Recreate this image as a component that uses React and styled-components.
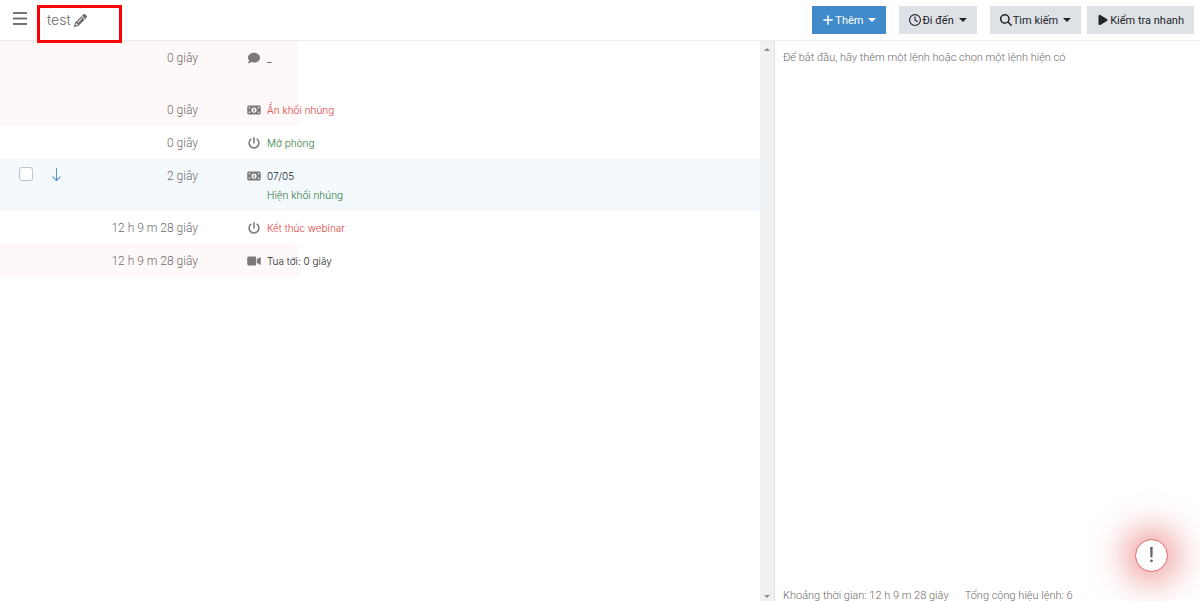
import styled, { createGlobalStyle } from "styled-components";
import {
    FaPencil,
    FaPlus,
    FaRegClock,
    FaMagnifyingGlass,
    FaPlay,
    FaComment,
    FaMoneyBill1,
    FaPowerOff,
    FaVideo,
} from "react-icons/fa6";
import { BsArrowDown } from "react-icons/bs";

const commands = [
    { id: 1, time: "0 giây", icon: <FaComment/>, title: "_", tall: true, passed: true },
    { id: 2, time: "0 giây", icon: <FaMoneyBill1/>, title: "Ẩn khối nhúng", tone: "red", passed: true },
    { id: 3, time: "0 giây", icon: <FaPowerOff/>, title: "Mở phòng", tone: "green" },
    { id: 4, time: "2 giây", icon: <FaMoneyBill1/>, title: "07/05", note: "Hiện khối nhúng", tall: true, active: true },
    { id: 5, time: "12 h 9 m 28 giây", icon: <FaPowerOff/>, title: "Kết thúc webinar", tone: "red" },
    { id: 6, time: "12 h 9 m 28 giây", icon: <FaVideo/>, title: "Tua tới: 0 giây", passed: true },
];

export default function App() {
    return (
        <Page>
            <GlobalStyle/>
            <Header>
                <MenuButton aria-label="Menu">
                    <svg width="14" height="13" viewBox="0 0 14 13">
                        <path d="M0 1h14M0 6.5h14M0 12h14" stroke="currentColor" strokeWidth="1.8"/>
                    </svg>
                </MenuButton>
                <Title>
                    test
                    <EditButton aria-label="Edit"><FaPencil/></EditButton>
                    <Highlight/>
                </Title>
                <Toolbar>
                    <ToolButton $primary><FaPlus/>Thêm<Caret/></ToolButton>
                    <ToolButton><FaRegClock/>Đi đến<Caret/></ToolButton>
                    <ButtonPair>
                        <ToolButton><FaMagnifyingGlass/>Tìm kiếm<Caret/></ToolButton>
                        <ToolButton><FaPlay/>Kiểm tra nhanh</ToolButton>
                    </ButtonPair>
                </Toolbar>
            </Header>
            <Main>
                <ListPane>
                    <Table>
                        <colgroup>
                            <CheckCol/>
                            <ArrowCol/>
                            <TimeCol/>
                            <IconCol/>
                            <col/>
                        </colgroup>
                        <tbody>
                            {commands.map(({ id, time, icon, title, note, tone, tall, passed, active }) => (
                                <Row key={id} $tall={tall} $passed={passed} $active={active}>
                                    <CheckCell>{active && <Checkbox type="checkbox" aria-label={title}/>}</CheckCell>
                                    <ArrowCell>{active && <BsArrowDown/>}</ArrowCell>
                                    <TimeCell>{time}</TimeCell>
                                    <IconCell>{icon}</IconCell>
                                    <NameCell $tone={tone}>
                                        {title}
                                        {note && <Note>{note}</Note>}
                                    </NameCell>
                                </Row>
                            ))}
                        </tbody>
                    </Table>
                    <ScrollTrack>
                        <ScrollArrow/>
                        <ScrollArrow $down/>
                    </ScrollTrack>
                </ListPane>
                <DetailPane>
                    <Hint>Để bắt đầu, hãy thêm một lệnh hoặc chọn một lệnh hiện có</Hint>
                    <Summary>
                        <span>Khoảng thời gian: 12 h 9 m 28 giây</span>
                        <span>Tổng cộng hiệu lệnh: 6</span>
                    </Summary>
                </DetailPane>
            </Main>
            <AlertButton aria-label="Alert">!</AlertButton>
        </Page>
    );
}

const GlobalStyle = createGlobalStyle`
    * {
        box-sizing: border-box;
    }
    body {
        margin: 0;
        background: #fff;
        color: #6f6a6a;
        font-family: Roboto, "Noto Sans", sans-serif;
        font-size: 11px;
        font-weight: 300;
    }
    button {
        font: inherit;
        border: none;
        padding: 0;
        background: none;
        color: inherit;
        cursor: pointer;
    }
`
const Page = styled.div`
    display: flex;
    flex-direction: column;
    height: 100vh;
    overflow: hidden;
`
const Header = styled.header`
    display: flex;
    align-items: center;
    flex: none;
    height: 41px;
    padding: 0 6px 0 13px;
    border-bottom: 1px solid #ebebec;
`
const MenuButton = styled.button`
    display: flex;
    padding-bottom: 3px;
    color: #777171;
`
const Title = styled.h1`
    position: relative;
    display: flex;
    align-items: center;
    gap: 3px;
    margin: 0 0 0 20px;
    font-family: Inter, sans-serif;
    font-size: 14px;
    font-weight: 300;
    line-height: 20px;
`
const EditButton = styled.button`
    display: flex;
    font-size: 13px;
`
const Highlight = styled.div`
    position: absolute;
    top: -5px;
    left: -10px;
    width: 85px;
    height: 38px;
    border: 3px solid #fb0007;
    pointer-events: none;
`
const Toolbar = styled.div`
    display: flex;
    gap: 13px;
    margin-left: auto;
`
const ButtonPair = styled.div`
    display: flex;
    gap: 6px;
`
const ToolButton = styled.button`
    && {
        display: flex;
        align-items: center;
        gap: 1px;
        height: 28px;
        padding: 0 10px;
        background: ${props => props.$primary ? "#428bca" : "#dee2e6"};
        color: ${props => props.$primary ? "#fff" : "#212529"};
        font-weight: 400;
        white-space: nowrap;
    }
    svg {
        font-size: 12px;
    }
`
const Caret = styled.span`
    margin-left: 4px;
    border: 4px solid transparent;
    border-top-color: currentColor;
    border-bottom: none;
`
const Main = styled.main`
    display: grid;
    grid-template-columns: 31fr 17fr;
    flex: 1;
    min-height: 0;
`
const ListPane = styled.section`
    display: flex;
    align-items: flex-start;
    min-width: 0;
    border-right: 1px solid #dee2e6;
`
const Table = styled.table`
    flex: 1;
    table-layout: fixed;
    width: 100%;
    border-collapse: collapse;
    line-height: 19px;
    td {
        padding: 8px 0 6px;
        vertical-align: top;
    }
`
const CheckCol = styled.col`
    width: 47px;
`
const ArrowCol = styled.col`
    width: 20px;
`
const TimeCol = styled.col`
    width: 131px;
`
const IconCol = styled.col`
    width: 69px;
`
const Row = styled.tr`
    height: ${props => props.$tall ? 52 : 33}px;
    background: ${props => props.$active ? "#f3f9fd" : "none"};
    ${props => props.$passed && `
        background: linear-gradient(#fff8f8, #fff8f8) no-repeat left top / 298px 100%;
    `}
`
const CheckCell = styled.td`
    text-align: center;
`
const Checkbox = styled.input`
    appearance: none;
    display: block;
    width: 14px;
    height: 14px;
    margin: 0 auto 0 19px;
    border: 1px solid #bfc3c9;
    border-radius: 3px;
    background: #fff;
`
const ArrowCell = styled.td`
    font-size: 15px;
    text-align: center;
    svg {
        display: block;
        margin: 0 auto 0 2px;
        color: #428bca;
    }
`
const TimeCell = styled.td`
    font-size: 12px;
    text-align: right;
    white-space: nowrap;
`
const IconCell = styled.td`
    text-align: right;
    svg {
        display: block;
        width: 14px;
        height: 12px;
        margin: 3px 6px 0 auto;
        color: #7d7777;
    }
`
const tones = {
    red: "#e0403f",
    green: "#2f7a38",
};
const NameCell = styled.td`
    font-family: Inter, sans-serif;
    font-size: 10px;
    color: ${props => tones[props.$tone] || "#212529"};
`
const Note = styled.div`
    color: ${tones.green};
`
const ScrollTrack = styled.div`
    display: flex;
    flex-direction: column;
    justify-content: space-between;
    align-items: center;
    align-self: stretch;
    flex: none;
    width: 14px;
    padding: 7px 0 3px;
    background: #f1f1f1;
`
const ScrollArrow = styled.span`
    border: 3px solid transparent;
    ${props => props.$down
        ? "border-top-color: #8b8b8b; border-bottom: none;"
        : "border-bottom-color: #8b8b8b; border-top: none;"}
`
const DetailPane = styled.section`
    display: flex;
    flex-direction: column;
    justify-content: space-between;
    min-width: 0;
    padding: 7px 8px 0;
`
const Hint = styled.p`
    margin: 0;
    line-height: 20px;
`
const Summary = styled.footer`
    display: flex;
    gap: 16px;
    height: 15px;
    line-height: 20px;
    white-space: nowrap;
`
const AlertButton = styled.button`
    && {
        position: fixed;
        right: 32px;
        bottom: 29px;
        width: 33px;
        height: 33px;
        border: 1px solid #e06666;
        border-radius: 50%;
        background: #fff;
        box-shadow: 0 0 36px 8px rgba(222, 50, 50, 0.6);
        color: #5f6068;
        font-size: 20px;
        font-weight: 500;
        line-height: 31px;
    }
`
